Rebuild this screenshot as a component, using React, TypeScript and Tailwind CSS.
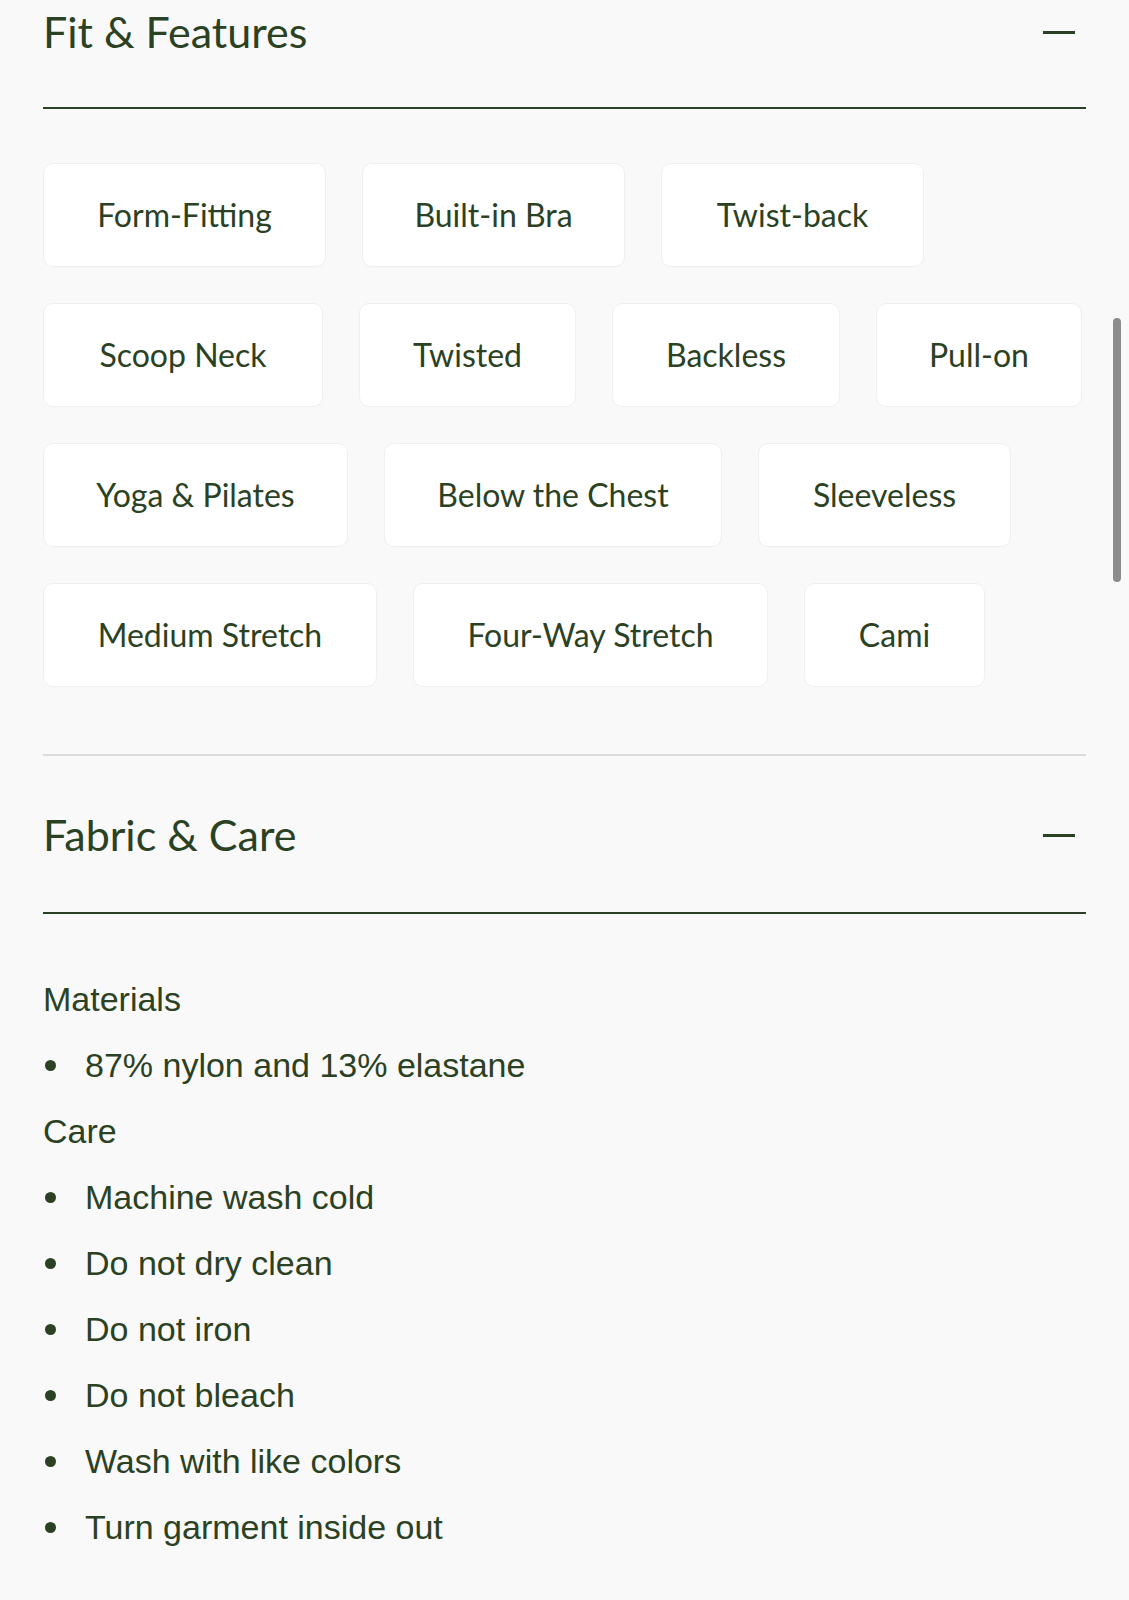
const chipRows = [
  [
    { label: "Form-Fitting", w: "w-[283px]" },
    { label: "Built-in Bra", w: "w-[263px]" },
    { label: "Twist-back", w: "w-[263px]" },
  ],
  [
    { label: "Scoop Neck", w: "w-[280px]" },
    { label: "Twisted", w: "w-[217px]" },
    { label: "Backless", w: "w-[228px]" },
    { label: "Pull-on", w: "w-[206px]" },
  ],
  [
    { label: "Yoga & Pilates", w: "w-[305px]" },
    { label: "Below the Chest", w: "w-[338px]" },
    { label: "Sleeveless", w: "w-[253px]" },
  ],
  [
    { label: "Medium Stretch", w: "w-[334px]" },
    { label: "Four-Way Stretch", w: "w-[355px]" },
    { label: "Cami", w: "w-[181px]" },
  ],
];

const careItems = [
  "Machine wash cold",
  "Do not dry clean",
  "Do not iron",
  "Do not bleach",
  "Wash with like colors",
  "Turn garment inside out",
];

const SectionHeader = ({ title, pt, pb }: { title: string; pt: string; pb: string }) => (
  <div className={`${pt} ${pb} border-b-2 border-[#2b4123]`}>
    <div className="h-[64px] flex items-center justify-between">
      <h2 className="font-['Lato',sans-serif] text-[43px] leading-[44px] text-[#2b4123]">
        {title}
      </h2>
      <span className="mr-[11px] block w-[32px] h-[3px] bg-[#2b4123]" />
    </div>
  </div>
);

const Bullet = ({ text }: { text: string }) => (
  <li className="flex items-center h-[66px]">
    <span className="w-[42px] flex">
      <span className="ml-[2px] w-[11px] h-[11px] rounded-full bg-[#2b4123]" />
    </span>
    <span>{text}</span>
  </li>
);

export default function App() {
  return (
    <div className="relative min-h-[1600px] bg-[#f9f9f9] overflow-hidden">
      <div className="px-[43px]">
        {/* Fit & Features */}
        <SectionHeader title="Fit & Features" pt="pt-0" pb="pb-[43px]" />

        <div className="mt-[54px] flex flex-col gap-[36px]">
          {chipRows.map((row, i) => (
            <div key={i} className="flex gap-[36px]">
              {row.map((chip) => (
                <div
                  key={chip.label}
                  className={`${chip.w} h-[104px] flex items-center justify-center rounded-[10px] bg-white border border-[#efefef] font-['Lato',sans-serif] text-[32px] text-[#2b4123]`}
                >
                  {chip.label}
                </div>
              ))}
            </div>
          ))}
        </div>

        <div className="mt-[67px] h-[2px] bg-[#dcdcdc]" />

        {/* Fabric & Care */}
        <SectionHeader title="Fabric & Care" pt="pt-[47px]" pb="pb-[45px]" />

        <div className="mt-[52px] font-['Liberation_Sans',Arial,sans-serif] text-[34px] text-[#2b4123]">
          <p className="h-[66px] leading-[66px]">Materials</p>
          <ul>
            <Bullet text="87% nylon and 13% elastane" />
          </ul>
          <p className="h-[66px] leading-[66px]">Care</p>
          <ul>
            {careItems.map((item) => (
              <Bullet key={item} text={item} />
            ))}
          </ul>
        </div>
      </div>

      {/* overlay scrollbar */}
      <div className="absolute left-[1113px] top-[318px] w-[8px] h-[264px] rounded-full bg-[#8c8c8c]" />
    </div>
  );
}
